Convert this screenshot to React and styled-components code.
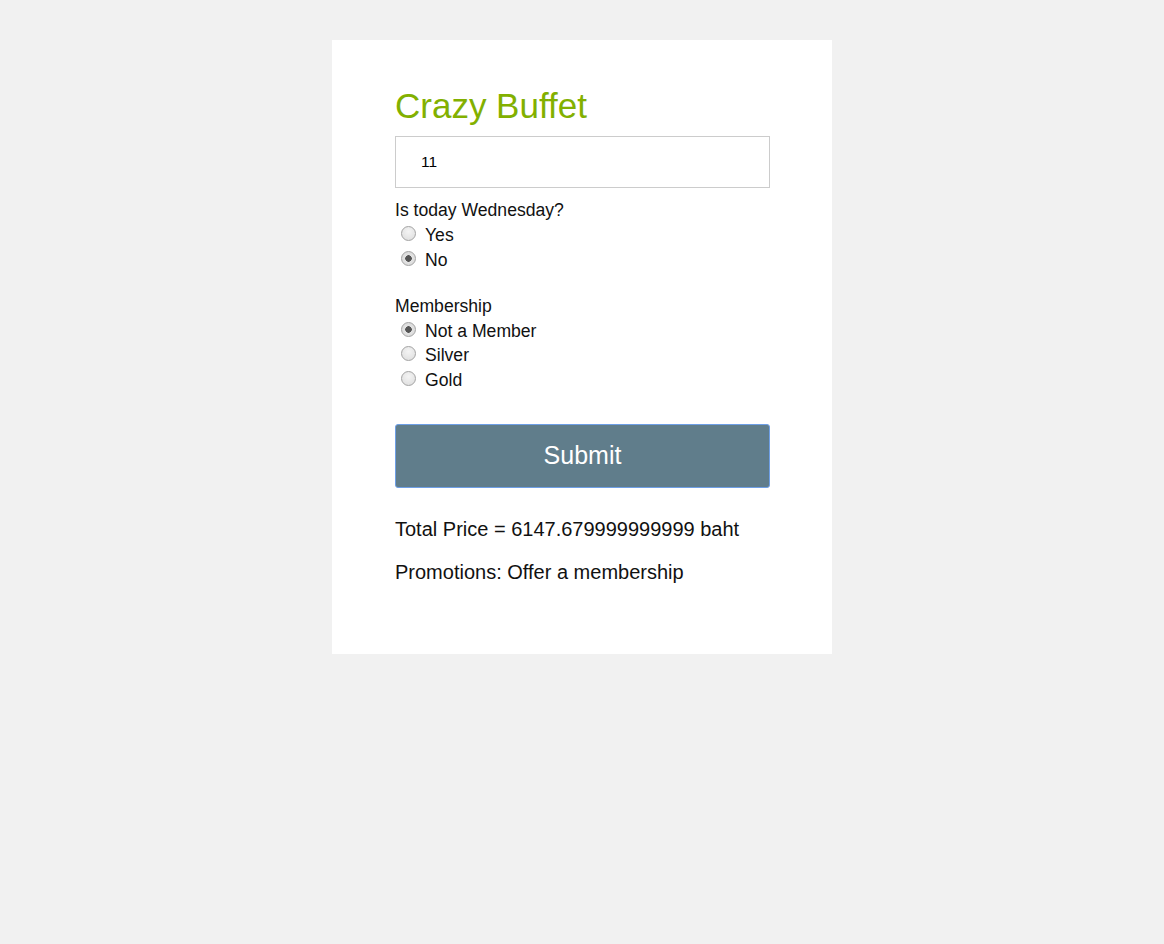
import React, { useState } from 'react';
import styled, { createGlobalStyle } from 'styled-components';

const GlobalStyle = createGlobalStyle`
    body {
        margin: 0;
        background: #f1f1f1;
        font-family: "Liberation Sans", Arial, sans-serif;
    }`;

const Page = styled.div`
    display: flex;
    justify-content: center;
    align-items: flex-start;
    padding-top: 40px;
    min-height: 944px;
    box-sizing: border-box`;

const Card = styled.div`
    width: 500px;
    box-sizing: border-box;
    background: #fff;
    padding: 46px 62px 70px 63px`;

const Title = styled.h1`
    margin: 0 0 10px;
    font-size: 35px;
    line-height: 40px;
    font-weight: normal;
    color: #82b000`;

const NumberInput = styled.input`
    display: block;
    width: 375px;
    height: 52px;
    box-sizing: border-box;
    border: 1px solid #cccccc;
    padding: 0 0 0 25px;
    font-family: "Liberation Sans", Arial, sans-serif;
    font-size: 15.5px;
    color: #000;
    outline: none`;

const Group = styled.div`
    margin-top: ${p => p.$top}px;
    font-size: 17.6px;
    color: #111`;

const Label = styled.div`
    line-height: 24.5px`;

const Option = styled.label`
    display: flex;
    align-items: center;
    box-sizing: border-box;
    height: 24.5px;
    padding: 2px 0 0 6px`;

const Radio = styled.input`
    appearance: none;
    width: 15px;
    height: 15px;
    margin: 0 9px 0 0;
    border-radius: 50%;
    border: 1px solid #a3a3a3;
    box-sizing: border-box;
    background: radial-gradient(circle at 50% 35%, #f4f4f4 0%, #dcdcdc 100%);
    position: relative;
    top: -2px;

    &:checked {
        background: radial-gradient(circle, #555 0 3px, #e3e3e3 3.5px, #d6d6d6 100%);
    }`;

const SubmitButton = styled.button`
    display: block;
    width: 375px;
    height: 64px;
    margin-top: 32px;
    background: #607d8b;
    border: 1px solid #6e9fe6;
    border-radius: 3px;
    color: #fff;
    font-family: "Liberation Sans", Arial, sans-serif;
    font-size: 25px;
    cursor: pointer`;

const Result = styled.p`
    margin: ${p => p.$top}px 0 0;
    font-size: 20px;
    line-height: 23px;
    color: #111`;

function RadioGroup({ label, name, options, value, onChange, top }) {
    return (
        <Group $top={top}>
            <Label>{label}</Label>
            {options.map(o => (
                <Option key={o}>
                    <Radio
                        type="radio"
                        name={name}
                        checked={value === o}
                        onChange={() => onChange(o)}
                    />
                    {o}
                </Option>
            ))}
        </Group>
    );
}

export default function App() {
    const [people, setPeople] = useState('11');
    const [wednesday, setWednesday] = useState('No');
    const [member, setMember] = useState('Not a Member');

    return (
        <Page>
            <GlobalStyle />
            <Card>
                <Title>Crazy Buffet</Title>
                <NumberInput value={people} onChange={e => setPeople(e.target.value)} />
                <RadioGroup
                    top={10}
                    label="Is today Wednesday?"
                    name="wednesday"
                    options={['Yes', 'No']}
                    value={wednesday}
                    onChange={setWednesday}
                />
                <RadioGroup
                    top={22}
                    label="Membership"
                    name="member"
                    options={['Not a Member', 'Silver', 'Gold']}
                    value={member}
                    onChange={setMember}
                />
                <SubmitButton>Submit</SubmitButton>
                <Result $top={30}>Total Price = 6147.679999999999 baht</Result>
                <Result $top={20}>Promotions: Offer a membership</Result>
            </Card>
        </Page>
    );
}
